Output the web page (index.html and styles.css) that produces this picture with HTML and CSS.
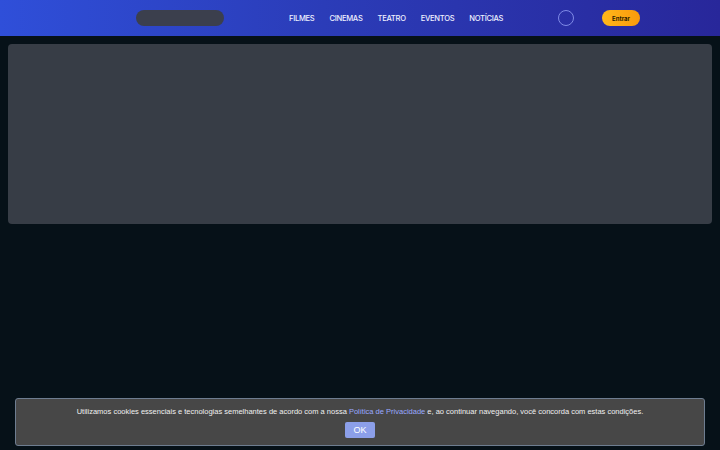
FILE: index.html
```html
<!DOCTYPE html>
<html lang="pt-BR">
<head>
  <meta charset="UTF-8">
  <meta name="viewport" content="width=device-width, initial-scale=1.0">
  <title>Início</title>
  <link rel="stylesheet" href="styles.css">
</head>
<body>
  <!-- Top bar -->
  <header class="topbar">
    <div class="search-pill"></div>
    <nav class="main-nav">
      <a href="#">FILMES</a>
      <a href="#">CINEMAS</a>
      <a href="#">TEATRO</a>
      <a href="#">EVENTOS</a>
      <a href="#">NOTÍCIAS</a>
    </nav>
    <span class="city-ring"></span>
    <button class="login-btn">Entrar</button>
  </header>

  <!-- Banner placeholder -->
  <main class="content">
    <div class="hero-skeleton"></div>
  </main>

  <!-- Cookie notice -->
  <div class="cookie-bar">
    <p>Utilizamos cookies essenciais e tecnologias semelhantes de acordo com a nossa <a href="#">Política de Privacidade</a> e, ao continuar navegando, você concorda com estas condições.</p>
    <button class="cookie-ok">OK</button>
  </div>
</body>
</html>
```

FILE: styles.css
```css
* {
  margin: 0;
  padding: 0;
  box-sizing: border-box;
}

body {
  background-color: #061118;
  font-family: 'Inter', sans-serif;
  height: 450px;
  overflow: hidden;
}

/* Top bar */
.topbar {
  height: 36px;
  display: flex;
  align-items: center;
  padding-left: 136px;
  background: linear-gradient(90deg, #2f4fd9 0%, #2b3cb8 45%, #28279a 100%);
}

.search-pill {
  width: 88px;
  height: 16px;
  border-radius: 8px;
  background-color: #3b3f4d;
}

.main-nav {
  display: flex;
  gap: 15px;
  margin-left: 65px;
  width: 216px;
}

.main-nav a {
  color: #eef0ff;
  text-decoration: none;
  font-size: 7.6px;
  font-weight: 500;
  letter-spacing: -0.3px;
  white-space: nowrap;
}

.city-ring {
  width: 16px;
  height: 16px;
  border: 1px solid #7f8ae6;
  border-radius: 50%;
  margin-left: 53px;
}

.login-btn {
  margin-left: 28px;
  width: 38px;
  height: 16px;
  border: none;
  border-radius: 8px;
  background: linear-gradient(90deg, #ffb71a, #f99a0c);
  color: #2a1c00;
  font-family: 'Inter', sans-serif;
  font-size: 6px;
  font-weight: 700;
}

/* Content */
.content {
  padding: 8px;
}

.hero-skeleton {
  height: 180px;
  border-radius: 4px;
  background-color: #373d46;
}

/* Cookie notice */
.cookie-bar {
  position: fixed;
  left: 15px;
  right: 15px;
  bottom: 4px;
  height: 48px;
  background-color: #474747;
  border: 1px solid #6e7d90;
  border-radius: 3px;
  text-align: center;
  padding-top: 8px;
  font-family: 'Liberation Sans', Arial, sans-serif;
}

.cookie-bar p {
  color: #f0f0f0;
  font-size: 7.5px;
  line-height: 10px;
}

.cookie-bar a {
  color: #9aa9ff;
  text-decoration: none;
}

.cookie-ok {
  margin-top: 5px;
  width: 30px;
  height: 16px;
  border: none;
  border-radius: 2px;
  background-color: #8c9fe9;
  color: #fff;
  font-family: 'Liberation Sans', Arial, sans-serif;
  font-size: 9px;
}
```
